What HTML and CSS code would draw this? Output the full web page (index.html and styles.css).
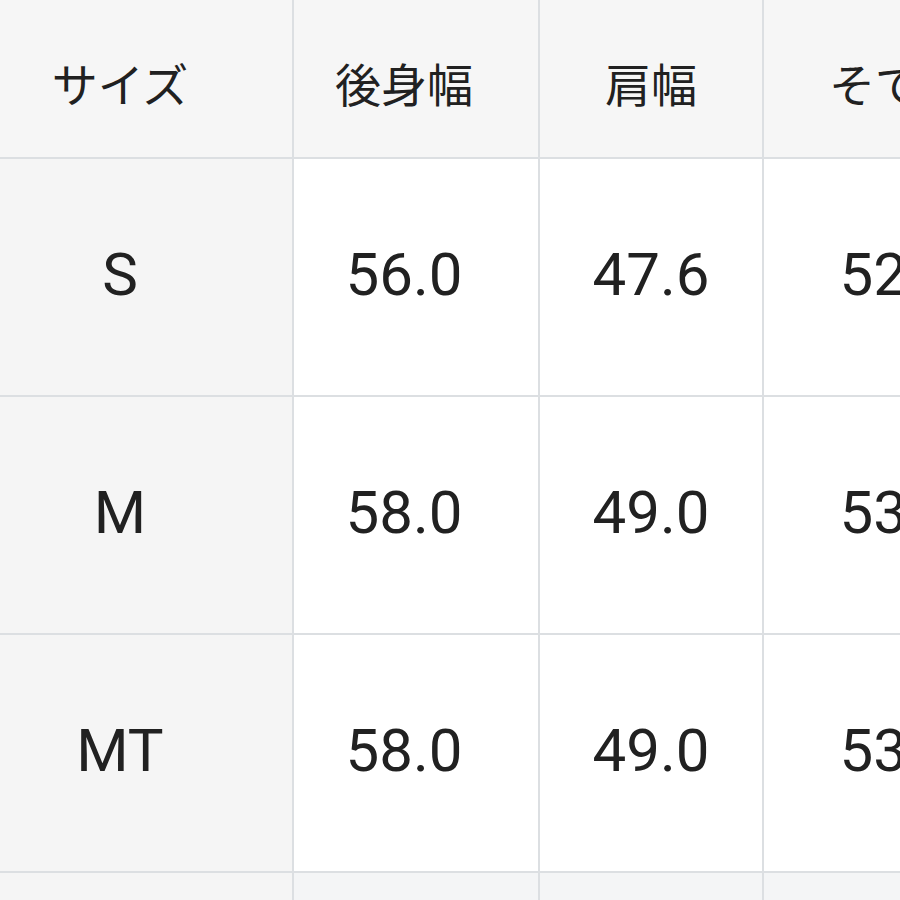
FILE: index.html
```html
<!DOCTYPE html>
<html lang="ja">
<head>
<meta charset="utf-8">
<title>サイズ表</title>
<link rel="stylesheet" href="styles.css">
</head>
<body>
<div class="table">
  <div class="cell head c1"><span class="jp">サイズ</span></div>
  <div class="cell head c2"><span class="jp">後身幅</span></div>
  <div class="cell head c3"><span class="jp">肩幅</span></div>
  <div class="cell head c4"><span class="jp">そで丈</span></div>

  <div class="cell side c1">S</div>
  <div class="cell c2">56.0</div>
  <div class="cell c3">47.6</div>
  <div class="cell c4">52.5</div>

  <div class="cell side c1">M</div>
  <div class="cell c2">58.0</div>
  <div class="cell c3">49.0</div>
  <div class="cell c4">53.5</div>

  <div class="cell side c1">MT</div>
  <div class="cell c2">58.0</div>
  <div class="cell c3">49.0</div>
  <div class="cell c4">53.5</div>

  <div class="cell side c1">L</div>
  <div class="cell muted c2">60.0</div>
  <div class="cell muted c3">50.4</div>
  <div class="cell muted c4">54.5</div>
</div>
</body>
</html>
```

FILE: styles.css
```css
html, body {
  margin: 0;
  padding: 0;
  width: 900px;
  height: 900px;
  overflow: hidden;
  background: #ffffff;
}

.table {
  display: grid;
  grid-template-columns: 292px 244px 222px 268px;
  grid-template-rows: 157px 236px 236px 236px 236px;
  gap: 2px;
  background: #dcdfe2;
  width: max-content;
  font-family: Roboto, "Noto Sans CJK JP", sans-serif;
  color: #212121;
}

.cell {
  display: flex;
  align-items: center;
  justify-content: center;
  background: #ffffff;
  font-size: 60px;
  line-height: 1;
  padding-bottom: 4px;
  box-sizing: border-box;
}

.head {
  background: #f6f6f6;
  padding-bottom: 0;
  padding-top: 6px;
}

.side {
  background: #f5f5f5;
}

.muted {
  background: #f4f5f6;
}

.c1 {
  padding-right: 52px;
}

.c2 {
  padding-right: 24px;
}

.jp {
  font-family: "Noto Sans CJK JP", sans-serif;
  font-size: 46px;
  font-weight: 400;
}
```
